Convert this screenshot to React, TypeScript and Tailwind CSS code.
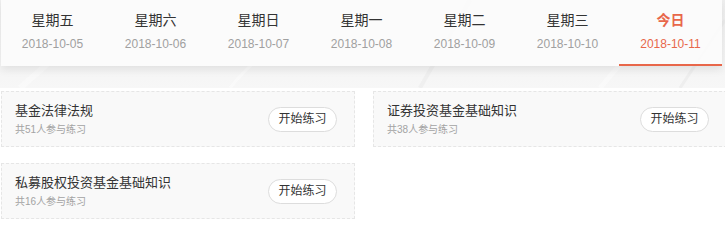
import React from "react";

const tabs = [
  { d: "星期五", t: "2018-10-05" },
  { d: "星期六", t: "2018-10-06" },
  { d: "星期日", t: "2018-10-07" },
  { d: "星期一", t: "2018-10-08" },
  { d: "星期二", t: "2018-10-09" },
  { d: "星期三", t: "2018-10-10" },
  { d: "今日", t: "2018-10-11", active: true },
];

const cards = [
  { title: "基金法律法规", n: 51 },
  { title: "证券投资基金基础知识", n: 38 },
  { title: "私募股权投资基金基础知识", n: 16 },
];

export default function App() {
  return (
    <div
      className="w-[725px] h-[234px] overflow-hidden bg-white"
      style={{ fontFamily: '"Liberation Sans", "Noto Sans CJK SC", sans-serif' }}
    >
      <div className="relative h-[88px] bg-gradient-to-b from-[#eeeeee] to-[#f7f7f7] overflow-hidden">
        <svg className="absolute inset-0" width="725" height="88" viewBox="0 0 725 88">
          <path d="M20 88 L120 0" stroke="#ffffff" strokeWidth="6" opacity="0.35" fill="none" />
          <path d="M230 88 C260 50 300 30 330 0" stroke="#ffffff" strokeWidth="3" opacity="0.4" fill="none" />
          <path d="M420 88 L470 0" stroke="#e6e6e6" strokeWidth="4" opacity="0.4" fill="none" />
          <path d="M600 88 C640 40 660 20 700 0" stroke="#ffffff" strokeWidth="5" opacity="0.35" fill="none" />
          <path d="M680 88 L725 20" stroke="#e4e4e4" strokeWidth="3" opacity="0.4" fill="none" />
        </svg>
        <div className="relative ml-[1px] mr-[3px] h-[66px] bg-[#fbfbfb]/95 shadow-[0_4px_8px_rgba(0,0,0,0.08)] flex">
          {tabs.map((tab) => (
            <div
              key={tab.t}
              className={
                "w-[103px] shrink-0 flex flex-col items-center pt-[11px] " +
                (tab.active ? "border-b-[2px] border-[#e8674a]" : "")
              }
            >
              <div
                className={
                  "text-[14px] leading-[19px] " +
                  (tab.active ? "text-[#e8674a] font-bold" : "text-[#333333]")
                }
              >
                {tab.d}
              </div>
              <div
                className={
                  "text-[12px] leading-[16px] mt-[6px] " +
                  (tab.active ? "text-[#e8674a]" : "text-[#a0a0a0]")
                }
              >
                {tab.t}
              </div>
            </div>
          ))}
        </div>
      </div>
      <div className="grid grid-cols-[354px_354px] gap-x-[18px] gap-y-[16px] pl-[1px] pt-[3px]">
        {cards.map((c) => (
          <div
            key={c.title}
            className="h-[56px] bg-[#f9f9f9] border border-dashed border-[#e6e6e6] flex items-center justify-between pl-[13px] pr-[17px]"
          >
            <div className="flex flex-col">
              <div className="text-[13px] leading-[18px] text-[#333333]">{c.title}</div>
              <div className="text-[10px] leading-[14px] mt-[3px] text-[#a3a3a3]">
                共{c.n}人参与练习
              </div>
            </div>
            <button className="w-[69px] h-[25px] rounded-full border border-[#dddddd] bg-white text-[12px] text-[#333333] leading-none">
              开始练习
            </button>
          </div>
        ))}
      </div>
    </div>
  );
}
